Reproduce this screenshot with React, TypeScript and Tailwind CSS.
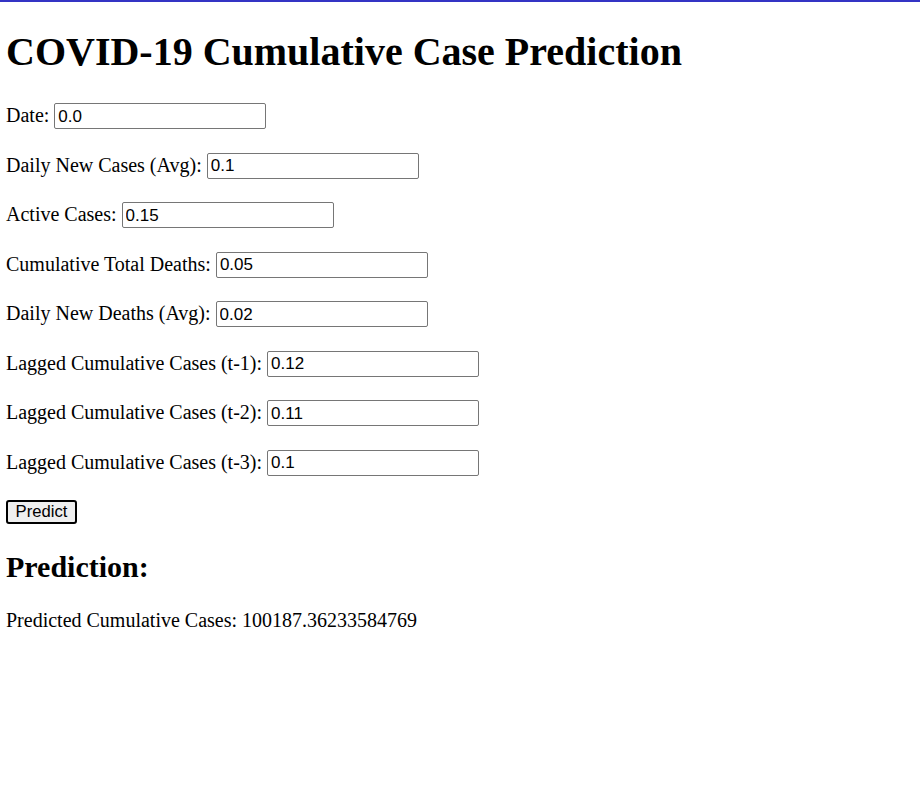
import { useState } from "react";

const fields = [
  { label: "Date:", value: "0.0" },
  { label: "Daily New Cases (Avg):", value: "0.1" },
  { label: "Active Cases:", value: "0.15" },
  { label: "Cumulative Total Deaths:", value: "0.05" },
  { label: "Daily New Deaths (Avg):", value: "0.02" },
  { label: "Lagged Cumulative Cases (t-1):", value: "0.12" },
  { label: "Lagged Cumulative Cases (t-2):", value: "0.11" },
  { label: "Lagged Cumulative Cases (t-3):", value: "0.1" },
];

interface FieldRowProps {
  label: string;
  value: string;
  onChange: (v: string) => void;
}

const FieldRow = ({ label, value, onChange }: FieldRowProps) => {
  return (
    <div className="flex items-center h-[26px]">
      <label className="mr-[5px] -mt-[1px]">{label}</label>
      <input
        type="text"
        value={value}
        onChange={(e) => onChange(e.target.value)}
        className="w-[212px] h-[26px] border border-[#767676] rounded-[2px] px-[3px] pt-[1px] text-[17px] text-black bg-white outline-none font-['Liberation_Sans',Arial,sans-serif]"
      />
    </div>
  );
};

export default function App() {
  const [values, setValues] = useState<string[]>(fields.map((f) => f.value));

  const handleChange = (index: number, v: string) => {
    setValues((prev) => prev.map((old, i) => (i === index ? v : old)));
  };

  return (
    <div className="min-h-[791px] w-[920px] bg-white text-black font-['Liberation_Serif','Times_New_Roman',serif]">
      <div className="h-[2px] bg-[#3434c4]"></div>
      <div className="pl-[6px] text-[20px] leading-[23px]">
        <h1 className="text-[40px] font-bold leading-[46px] pt-[27px] pb-[28px]">
          COVID-19 Cumulative Case Prediction
        </h1>
        <div className="flex flex-col gap-[23.5px]">
          {fields.map((f, i) => (
            <FieldRow
              key={i}
              label={f.label}
              value={values[i]}
              onChange={(v) => handleChange(i, v)}
            />
          ))}
        </div>
        <button className="mt-[24px] w-[71px] h-[24px] border-2 border-black rounded-[3px] bg-[#efefef] text-[16.67px] leading-[18px] font-['Liberation_Sans',Arial,sans-serif]">
          Predict
        </button>
        <h2 className="text-[30px] font-bold leading-[34px] mt-[26px]">Prediction:</h2>
        <p className="mt-[25px]">Predicted Cumulative Cases: 100187.36233584769</p>
      </div>
    </div>
  );
}
